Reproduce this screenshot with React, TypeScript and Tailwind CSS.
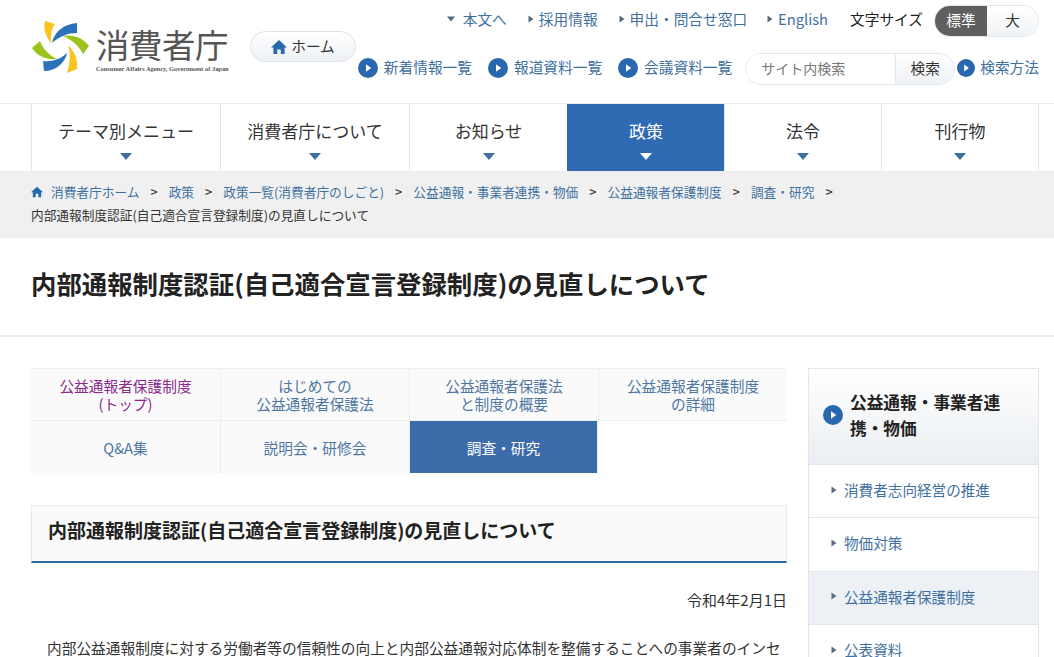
import React from "react";

const Play = ({ size = 20 }: { size?: number }) => (
  <svg width={size} height={size} viewBox="0 0 20 20" className="shrink-0">
    <circle cx="10" cy="10" r="10" fill="#2a68ae" />
    <path d="M8 6.2 L13.2 10 L8 13.8 Z" fill="#fff" />
  </svg>
);

const Tri = () => (
  <svg width="6" height="8" viewBox="0 0 6 8" className="shrink-0">
    <path d="M0.5 0.5 L5.5 4 L0.5 7.5 Z" fill="#5b6b7b" />
  </svg>
);

const Down = () => (
  <svg width="12" height="7" viewBox="0 0 12 7">
    <path d="M0 0 H12 L6 7 Z" fill="currentColor" />
  </svg>
);

const House = ({ size = 16, color = "#2a68ae" }: { size?: number; color?: string }) => (
  <svg width={size} height={size} viewBox="0 0 16 16" className="shrink-0">
    <path d="M8 1 L16 8.4 H13.6 V15 H9.8 V10.4 H6.2 V15 H2.4 V8.4 H0 Z" fill={color} />
  </svg>
);

const Logo = () => (
  <svg width="60" height="54" viewBox="0 0 60 54" className="shrink-0">
    <path d="M14 0 L24 3 C20 8 20 14 20 22 C15 16 12 8 14 0 Z" fill="#f7c51e" />
    <path d="M21 22 C23 11 33 3 46 2 L46 12 C37 12 29 15 21 22 Z" fill="#2a73b8" />
    <path d="M32 15 C42 13 52 17 58 25 L52 33 C48 25 41 19 32 15 Z" fill="#9cc31c" />
    <path d="M37 24 C44 31 47 39 46 48 L36 52 C39 43 40 33 37 24 Z" fill="#f7c51e" />
    <path d="M36 32 C34 42 25 50 13 50 L12 40 C21 41 30 38 36 32 Z" fill="#2a73b8" />
    <path d="M1 27 L9 20 C12 28 18 34 26 38 C15 39 6 35 1 27 Z" fill="#9cc31c" />
  </svg>
);

const link = "text-[#3f70a0]";

const TopLink = ({ children }: { children: React.ReactNode }) => (
  <span className={`flex items-center gap-[5px] ${link}`}>
    <svg width="6" height="8" viewBox="0 0 6 8" className="shrink-0"><path d="M0.5 0.5 L5.5 4 L0.5 7.5 Z" fill="#55697d" /></svg>
    {children}
  </span>
);

const PlayLink = ({ children }: { children: React.ReactNode }) => (
  <span className={`flex items-center gap-[6px] ${link}`}>
    <Play />
    {children}
  </span>
);

const nav = [
  ["テーマ別メニュー", "w-[189px]"],
  ["消費者庁について", "w-[189px]"],
  ["お知らせ", "w-[158px]"],
  ["政策", "w-[157px]"],
  ["法令", "w-[157px]"],
  ["刊行物", "w-[158px]"],
];

const crumbs = ["消費者庁ホーム", "政策", "政策一覧(消費者庁のしごと)", "公益通報・事業者連携・物価", "公益通報者保護制度", "調査・研究"];

const Tab = ({ children, active, visited, first, bottom }: { children: React.ReactNode; active?: boolean; visited?: boolean; first?: boolean; bottom?: boolean }) => (
  <div
    className={`h-[52px] flex items-center justify-center text-center pt-[1px] leading-[18px] text-[14.7px] ${
      active ? "bg-[#3d6cab] text-white border-x border-[#ececec]" : `bg-[#fafafa] ${visited ? "text-[#8a2a8f]" : "text-[#4f77a3]"}`
    } ${first || active ? "" : "border-l border-[#ececec]"} ${bottom ? "border-b border-[#eeeeee]" : ""}`}
  >
    <div>{children}</div>
  </div>
);

const SideItem = ({ children, on }: { children: React.ReactNode; on?: boolean }) => (
  <div className={`h-[53.4px] shrink-0 flex items-center gap-[7px] pl-[22px] pb-[3px] border-b border-[#e4e6e8] text-[14.6px] ${link} ${on ? "bg-[#edf1f5]" : "bg-white"}`}>
    <Tri />
    {children}
  </div>
);

export default function App() {
  return (
    <div
      className="w-[1054px] h-[657px] overflow-hidden bg-white text-[#222]"
      style={{ fontFamily: '"Noto Sans CJK JP", "Liberation Sans", sans-serif' }}
    >
      {/* header */}
      <header className="h-[103px] flex pl-[31px] pr-[15px]">
        <div className="w-[197px] shrink-0 pt-[21px] flex gap-[5px]">
          <Logo />
          <div className="pt-[4px] text-[#555]">
            <div className="text-[33.5px] leading-[38px] tracking-[-0.5px] whitespace-nowrap font-normal">消費者庁</div>
            <div className="text-[6.4px] leading-[8px] mt-[2px] font-bold whitespace-nowrap" style={{ fontFamily: '"Liberation Serif", serif' }}>
              Consumer Affairs Agency, Government of Japan
            </div>
          </div>
        </div>
        <div className="w-[106px] ml-[22px] mt-[31px] h-[31px] shrink-0 rounded-full border border-[#dfe3e8] bg-gradient-to-b from-white to-[#eef1f5] flex items-center justify-center gap-[4px] text-[14.7px] text-[#333]">
          <House />
          ホーム
        </div>
        <div className="flex-1 flex flex-col items-end pt-[5px]">
          <div className="h-[32px] flex items-center text-[14.7px] leading-none whitespace-nowrap">
            <span className={`flex items-center gap-[8px] ${link} mr-[21px] pb-[3px]`}>
              <svg width="8" height="6" viewBox="0 0 8 6"><path d="M0 0.5 H8 L4 5.5 Z" fill="#55697d" /></svg>
              本文へ
            </span>
            <span className="mr-[21px] pb-[3px]"><TopLink>採用情報</TopLink></span>
            <span className="mr-[20px] pb-[3px]"><TopLink>申出・問合せ窓口</TopLink></span>
            <span className="mr-[22px] pb-[3px]"><TopLink>English</TopLink></span>
            <span className="mr-[11px] text-[#222] pb-[3px]">文字サイズ</span>
            <div className="flex h-[32px] w-[105px] rounded-full border border-[#e3e6ea] overflow-hidden">
              <span className="w-[52px] bg-[#5f5f5f] text-white flex items-center justify-center pb-[2px]">標準</span>
              <span className="flex-1 bg-gradient-to-b from-white to-[#f0f3f6] flex items-center justify-center text-[#333] pb-[2px]">大</span>
            </div>
          </div>
          <div className="h-[32px] flex items-center text-[14.7px] leading-none whitespace-nowrap mt-[16px]">
            <span className="mr-[16px] pb-[3px]"><PlayLink>新着情報一覧</PlayLink></span>
            <span className="mr-[16px] pb-[3px]"><PlayLink>報道資料一覧</PlayLink></span>
            <span className="mr-[13px] pb-[3px]"><PlayLink>会議資料一覧</PlayLink></span>
            <div className="flex h-[32px] w-[210px] rounded-full border border-[#e3e6ea] overflow-hidden mr-[2px]">
              <span className="w-[149px] pl-[15px] pb-[3px] flex items-center text-[14px] text-[#777] bg-white">サイト内検索</span>
              <span className="flex-1 flex items-center justify-center pb-[1px] bg-gradient-to-b from-white to-[#eef1f5] border-l border-[#e3e6ea] text-[#333]">検索</span>
            </div>
            <span className={`flex items-center gap-[5px] pb-[3px] ${link}`}>
              <Play size={18} />
              検索方法
            </span>
          </div>
        </div>
      </header>

      {/* global nav */}
      <nav className="h-[69px] border-t border-b border-[#ebebeb] pl-[31px] pr-[15px] flex">
        {nav.map(([label, w], i) => (
          <div
            key={i}
            className={`${w} border-l ${label === "政策" ? "border-[#2f6ab2]" : "border-[#e6e6e6]"} ${i === 5 ? "border-r" : ""} flex flex-col items-center pt-[15px] ${
              label === "政策" ? "bg-[#2f6ab2] text-white" : "text-[#333]"
            }`}
          >
            <span className="text-[17px] leading-[24px]">{label}</span>
            <span className={`mt-[10px] ${label === "政策" ? "text-white" : "text-[#3d6fa3]"}`}>
              <Down />
            </span>
          </div>
        ))}
      </nav>

      {/* breadcrumb */}
      <div className="h-[66px] bg-[#f0f0f0] pl-[31px] pr-[15px] pt-[8px] text-[12.7px] leading-[23px]">
        <div className="flex items-center whitespace-nowrap">
          <span className="mr-[8px]"><House size={12} color="#2a68ae" /></span>
          {crumbs.map((c) => (
            <React.Fragment key={c}>
              <span className={link}>{c}</span>
              <span className="mx-[11px] text-[#333] font-medium">&gt;</span>
            </React.Fragment>
          ))}
        </div>
        <div className="text-[#333]">内部通報制度認証(自己適合宣言登録制度)の見直しについて</div>
      </div>

      {/* page title */}
      <div className="h-[99px] border-b-2 border-[#ececec] pl-[31px] flex items-center">
        <h1 className="text-[25.4px] font-bold text-[#222] leading-none pb-[6px]">
          内部通報制度認証(自己適合宣言登録制度)の見直しについて
        </h1>
      </div>

      {/* content */}
      <div className="flex pl-[31px] pr-[15px] pt-[31px] gap-[21px]">
        <main className="w-[756px] shrink-0">
          <div className="grid grid-cols-[189px_189px_189px_189px] border-t border-[#f0f0f0]">
            <Tab first visited bottom>公益通報者保護制度<br />(トップ)</Tab>
            <Tab bottom>はじめての<br />公益通報者保護法</Tab>
            <Tab bottom>公益通報者保護法<br />と制度の概要</Tab>
            <Tab bottom>公益通報者保護制度<br />の詳細</Tab>
            <Tab first>Q&amp;A集</Tab>
            <Tab>説明会・研修会</Tab>
            <Tab active>調査・研究</Tab>
          </div>
          <div className="mt-[32px] h-[58px] border border-[#e8e8e8] border-b-2 border-b-[#2f6aa6] bg-[#fafafa] flex items-center pl-[16px]">
            <h2 className="text-[19px] font-bold text-[#222] leading-none pb-[8px]">
              内部通報制度認証(自己適合宣言登録制度)の見直しについて
            </h2>
          </div>
          <p className="mt-[27px] text-right text-[15px] leading-[20px] text-[#333]">令和4年2月1日</p>
          <p className="mt-[29px] pl-[16px] text-[14.7px] leading-[18px] text-[#333] whitespace-nowrap">
            内部公益通報制度に対する労働者等の信頼性の向上と内部公益通報対応体制を整備することへの事業者のインセ
          </p>
        </main>
        <aside className="w-[231px] shrink-0 border border-[#e4e6e8] border-b-0 flex flex-col h-[400px]">
          <div className="h-[96px] shrink-0 flex items-center gap-[7px] pl-[14px] pr-[32px] pb-[3px] border-b border-[#e4e6e8] bg-gradient-to-b from-white to-[#eaeef2]">
            <Play />
            <span className="text-[16.7px] font-bold leading-[26px] text-[#222]">公益通報・事業者連携・物価</span>
          </div>
          <SideItem>消費者志向経営の推進</SideItem>
          <SideItem>物価対策</SideItem>
          <SideItem on>公益通報者保護制度</SideItem>
          <SideItem>公表資料</SideItem>
        </aside>
      </div>
    </div>
  );
}
